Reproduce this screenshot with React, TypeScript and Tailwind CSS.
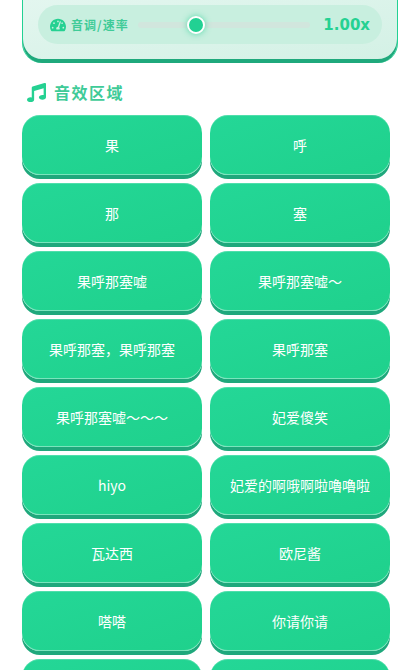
import React from "react";
import { FaMusic, FaTachometerAlt } from "react-icons/fa";

const CJK = "font-['Noto_Sans_CJK_SC','Noto_Sans',sans-serif]";

const sounds = [
  "果",
  "呼",
  "那",
  "塞",
  "果呼那塞嘘",
  "果呼那塞嘘～",
  "果呼那塞，果呼那塞",
  "果呼那塞",
  "果呼那塞嘘～～～",
  "妃爱傻笑",
  "hiyo",
  "妃爱的啊哦啊啦嚕嚕啦",
  "瓦达西",
  "欧尼酱",
  "嗒嗒",
  "你请你请",
  "",
  "",
];

function SoundButton({ label }: { label: string }) {
  return (
    <button className="flex h-[60px] items-center justify-center rounded-[18px] bg-gradient-to-br from-[#24d797] to-[#1fd18c] pt-[1px] text-[14px] text-white shadow-[0_4px_0_#1fa87c,inset_0_-1px_0_rgba(255,255,255,0.4),inset_0_1px_0_rgba(255,255,255,0.2)]">
      {label}
    </button>
  );
}

export default function App() {
  return (
    <div className={`h-[670px] w-[419px] overflow-hidden bg-white ${CJK}`}>
      <div className="pl-[22px] pr-[22px]">
        {/* Pitch card, scrolled partly out of view */}
        <div className="flex h-[63px] w-[376px] items-start rounded-b-[20px] border-x border-[#22d193] bg-gradient-to-br from-[#e3f6ef] to-[#d3f1e5] px-[15px] pt-[5px] shadow-[inset_0_-4px_0_#1fa97c]">
          <div className="flex h-[39px] w-full items-center rounded-[20px] bg-[#c8efdf] px-[12px]">
            <FaTachometerAlt size={16} className="shrink-0 text-[#25d192]" />
            <span className="ml-[5px] w-[58px] whitespace-nowrap text-[12px] font-bold tracking-[1px] text-[#3fcb98]">
              音调/速率
            </span>
            <div className="relative ml-[9px] h-[6px] w-[172px] rounded-full bg-[#d1e6dd]">
              <div className="absolute left-[49px] top-[-6px] h-[18px] w-[18px] rounded-full border-2 border-white bg-[#22d193] shadow-[0_0_6px_rgba(34,209,147,0.7)]" />
            </div>
            <span className="ml-auto pt-[2px] font-['DejaVu_Sans',sans-serif] text-[15px] font-bold text-[#25d192]">
              1.00x
            </span>
          </div>
        </div>

        <div className="mt-[17px] flex h-[24px] items-center pl-[5px]">
          <FaMusic size={19} className="text-[#25d192]" />
          <h2 className="ml-[8px] text-[16px] font-bold tracking-[1.5px] text-[#3fcb98]">音效区域</h2>
        </div>

        <div className="mt-[11px] grid w-[368px] grid-cols-2 gap-x-[8px] gap-y-[8px]">
          {sounds.map((s, i) => (
            <SoundButton key={i} label={s} />
          ))}
        </div>
      </div>
    </div>
  );
}
